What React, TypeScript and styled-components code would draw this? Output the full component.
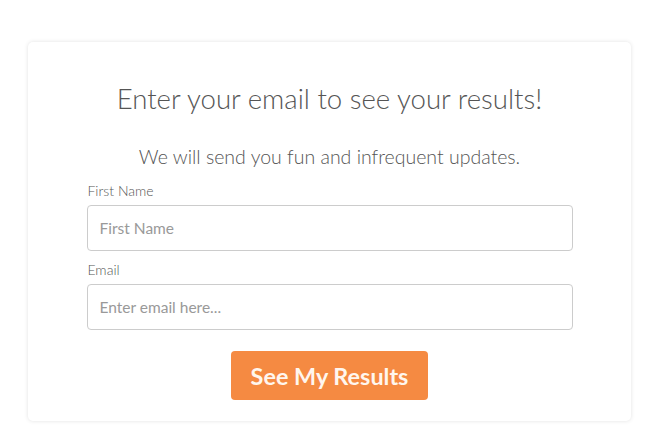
import React from 'react';
import styled, { createGlobalStyle } from 'styled-components';

const GlobalStyle = createGlobalStyle`
  body {
    margin: 0;
    background: #ffffff;
    font-family: Lato, "Open Sans", sans-serif;
  }
`;

const Page = styled.div`
  padding: 42px 32px 20px 28px;
`;

const Card = styled.div`
  background: #fff;
  border-radius: 5px;
  box-shadow: 0 0 4px rgba(0, 0, 0, 0.12);
  padding: 40px 0 21px;
  display: flex;
  flex-direction: column;
  align-items: center;
`;

const Title = styled.h2`
  margin: 0;
  font-size: 27.6px;
  font-weight: 300;
  line-height: 34px;
  color: #555;
`;

const Subtitle = styled.p`
  margin: 28px 0 0;
  font-size: 19.5px;
  font-weight: 300;
  line-height: 26px;
  color: #555;
`;

const Form = styled.form`
  width: 486px;
  margin-top: 12px;
  display: flex;
  flex-direction: column;
`;

const Field = styled.div`
  display: flex;
  flex-direction: column;
  margin-bottom: 10px;
`;

const Label = styled.label`
  font-size: 14px;
  font-weight: 300;
  line-height: 18px;
  color: #555;
  margin-bottom: 5px;
  margin-left: 1px;
`;

const Input = styled.input`
  box-sizing: border-box;
  height: 46px;
  width: 100%;
  border: 1px solid #ccc;
  border-radius: 4px;
  padding: 0 12px;
  font-family: Lato, sans-serif;
  font-size: 15.5px;
  color: #444;
  outline: none;

  &::placeholder {
    color: #999;
  }
`;

const Button = styled.button`
  align-self: center;
  margin-top: 11px;
  width: 197px;
  height: 49px;
  border: none;
  border-radius: 4px;
  background: #f58a42;
  color: #fff6ee;
  font-family: Lato, sans-serif;
  font-size: 23.4px;
  font-weight: 700;
  cursor: pointer;
`;

export default function App() {
  return (
    <>
      <GlobalStyle />
      <Page>
        <Card>
          <Title>Enter your email to see your results!</Title>
          <Subtitle>We will send you fun and infrequent updates.</Subtitle>
          <Form onSubmit={(e) => e.preventDefault()}>
            <Field>
              <Label htmlFor="first-name">First Name</Label>
              <Input id="first-name" type="text" placeholder="First Name" />
            </Field>
            <Field>
              <Label htmlFor="email">Email</Label>
              <Input id="email" type="email" placeholder="Enter email here..." />
            </Field>
            <Button type="submit">See My Results</Button>
          </Form>
        </Card>
      </Page>
    </>
  );
}
